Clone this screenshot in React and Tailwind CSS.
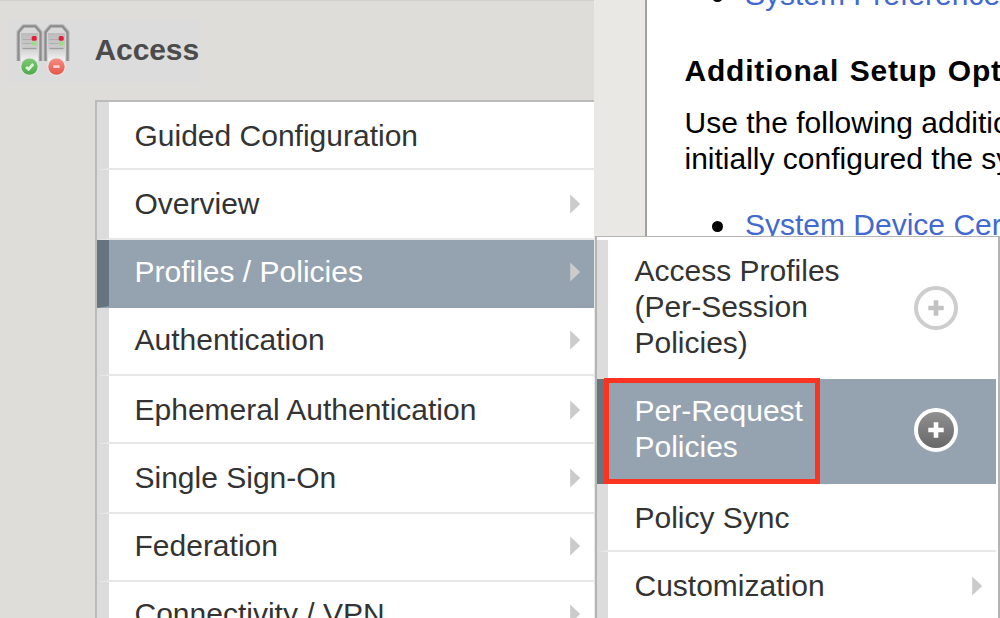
import React from "react";

const menu = [
  { label: "Guided Configuration", row: "h-[68px] pt-4" },
  { label: "Overview", row: "h-[70px] pt-4", arrow: true },
  { label: "Profiles / Policies", row: "h-[68px] pt-[14px]", arrow: true, active: true },
  { label: "Authentication", row: "h-[68px] pt-[14px]", arrow: true },
  { label: "Ephemeral Authentication", row: "h-[68px] pt-4", arrow: true },
  { label: "Single Sign-On", row: "h-[70px] pt-4", arrow: true },
  { label: "Federation", row: "h-[68px] pt-[14px]", arrow: true },
  { label: "Connectivity / VPN", row: "h-[68px] pt-[14px]", arrow: true },
];

function Arrow() {
  return (
    <svg width="11" height="20" viewBox="0 0 11 20" className="block shrink-0">
      <path d="M0.2 0.5 L10.2 10 L0.2 19.5 Z" fill="#cbcbcb" />
    </svg>
  );
}

function MenuRow({ item }) {
  return (
    <li
      className={`flex items-start border-b-2 border-l-[12px] pl-[25.5px] pr-[13px] ${item.row} ${
        item.active
          ? "border-b-[#93a1af] border-l-[#667480] bg-[#95a2b0] text-white"
          : "border-b-[#e8e8e8] border-l-[#dcdcdc] bg-white text-[#333]"
      }`}
    >
      <span className="grow">{item.label}</span>
      {item.arrow && (
        <span className="pt-2">
          <Arrow />
        </span>
      )}
    </li>
  );
}

function Server({ x }) {
  return (
    <g transform={`translate(${x} 0)`}>
      <path d="M1.8 37 V8 L7 2 H19 L24.2 8 V37" fill="#d8d8d8" stroke="#b4b4b4" strokeWidth="3.6" strokeLinejoin="round" />
      <path d="M2 37 V8.4 L7.2 2.2 H18.8 L24 8.4 V37" fill="none" stroke="#8c8c8c" strokeWidth="2" strokeLinejoin="round" />
      <rect x="4.5" y="9" width="17" height="28" fill="url(#serverFace)" />
      <path d="M6 15.5 H15 M6 19.5 H15" stroke="#adadad" strokeWidth="1" />
      <path d="M6 24.5 H20" stroke="#9f9f9f" strokeWidth="1.4" />
      <rect x="15.2" y="12" width="5" height="4.8" rx="1.6" fill="#e31f35" />
      <rect x="15.4" y="17.4" width="4.6" height="4" rx="1.5" fill="#98e07b" />
    </g>
  );
}

function AccessIcon() {
  return (
    <svg width="56" height="54" viewBox="0 0 56 54" className="block shrink-0">
      <defs>
        <linearGradient id="serverFace" x1="0" y1="0" x2="0" y2="1">
          <stop offset="0" stopColor="#bcbcbc" />
          <stop offset="0.5" stopColor="#cbcbcb" />
          <stop offset="1" stopColor="#f4f4f4" />
        </linearGradient>
        <linearGradient id="okFill" x1="0" y1="0" x2="0" y2="1">
          <stop offset="0" stopColor="#7dca73" />
          <stop offset="1" stopColor="#4fa94c" />
        </linearGradient>
        <linearGradient id="noFill" x1="0" y1="0" x2="0" y2="1">
          <stop offset="0" stopColor="#f58c80" />
          <stop offset="1" stopColor="#e4564b" />
        </linearGradient>
      </defs>
      <Server x={0.5} />
      <Server x={27.5} />
      <circle cx="13.5" cy="42.6" r="9.4" fill="#e6e6e6" />
      <circle cx="13.5" cy="42.6" r="8.2" fill="url(#okFill)" />
      <path d="M10 43 L12.6 45.2 L17.2 40" fill="none" stroke="#dff3db" strokeWidth="2.8" />
      <circle cx="40.5" cy="42.6" r="9.4" fill="#e6e6e6" />
      <circle cx="40.5" cy="42.6" r="8.2" fill="url(#noFill)" />
      <path d="M37.4 42.6 H43.6" stroke="#fbd9d4" strokeWidth="2.6" />
    </svg>
  );
}

function PlusButton({ active }) {
  return (
    <svg width="46" height="46" viewBox="0 0 46 46" className="block shrink-0">
      <defs>
        <linearGradient id="plusFill" x1="0" y1="0" x2="0" y2="1">
          <stop offset="0" stopColor="#929292" />
          <stop offset="1" stopColor="#656565" />
        </linearGradient>
      </defs>
      <circle
        cx="23"
        cy="23"
        r="20"
        fill={active ? "url(#plusFill)" : "#ffffff"}
        stroke={active ? "#ffffff" : "#cdcdcd"}
        strokeWidth="4"
      />
      <path d="M23 15.3 V30.7 M15.3 23 H30.7" stroke={active ? "#ffffff" : "#c2c2c2"} strokeWidth="4.6" />
    </svg>
  );
}

function Bullet({ children }) {
  return (
    <li className="flex h-9 items-start">
      <span className="ml-[27px] mr-[22px] mt-[14px] size-[11px] shrink-0 rounded-full bg-black" />
      <span className="text-[#4269d0]">{children}</span>
    </li>
  );
}

export default function App() {
  return (
    <div className="relative flex h-[618px] w-[1000px] overflow-hidden whitespace-nowrap bg-white font-['Liberation_Sans',Arial,sans-serif] text-[30px] leading-9">
      <nav className="flex h-full w-[594px] shrink-0 flex-col overflow-hidden border-t border-[#d0d0ce] bg-[#deddd9]">
        <header className="ml-2 mt-[19px] flex h-[62px] w-[192px] shrink-0 items-start bg-[#dcdcdc]">
          <span className="ml-2 mt-1">
            <AccessIcon />
          </span>
          <h1 className="ml-[22.5px] mt-3 font-bold tracking-[-0.1px] text-[#4b4b4b]">Access</h1>
        </header>
        <ul className="ml-[95px] mt-[18px] w-[499px] shrink-0 border-l-2 border-t-2 border-[#bbb] bg-white">
          {menu.map((item) => (
            <MenuRow key={item.label} item={item} />
          ))}
        </ul>
      </nav>

      <div className="h-full w-[51px] shrink-0 bg-[#e9e8e4]" />

      <main className="h-full w-[355px] shrink-0 overflow-hidden border-l-2 border-[#a0a0a0] bg-white text-black">
        <ul className="-mt-[23px] ml-[38px]">
          <Bullet>System Preferences</Bullet>
        </ul>
        <h2 className="ml-[37.5px] mt-10 font-bold tracking-[0.8px] [word-spacing:1.5px]">Additional Setup Options</h2>
        <p className="ml-[37.5px] mt-4">
          Use the following additional
          <br />
          initially configured the system
        </p>
        <ul className="ml-[38px] mt-[30px]">
          <Bullet>System Device Certificate</Bullet>
        </ul>
      </main>

      <aside className="absolute left-[595px] top-[236px] h-[382px] w-[405px] border-l-2 border-r-2 border-t border-[#b4b4b4] bg-white pr-[2px] pt-[3px] text-[#333]">
        <div className="flex h-[139px] items-start border-l-[11px] border-[#dcdcdc] pl-[26.5px] pr-[37px]">
          <p className="grow pt-[13px]">
            Access Profiles
            <br />
            (Per-Session
            <br />
            Policies)
          </p>
          <span className="mt-[45px]">
            <PlusButton />
          </span>
        </div>
        <div className="flex h-[105px] items-start border-l-[11px] border-[#667480] bg-[#95a2b0] pl-[26.5px] pr-[37px] text-white">
          <p className="grow pt-[14px]">
            Per-Request
            <br />
            Policies
          </p>
          <span className="mt-[28px]">
            <PlusButton active />
          </span>
        </div>
        <div className="h-[68px] border-b-2 border-l-[11px] border-b-[#e8e8e8] border-l-[#dcdcdc] pl-[26.5px] pt-4">
          Policy Sync
        </div>
        <div className="flex h-[66px] items-start border-l-[11px] border-[#dcdcdc] pl-[26.5px] pr-[13px] pt-4">
          <span className="grow">Customization</span>
          <span className="pt-2">
            <Arrow />
          </span>
        </div>
      </aside>

      <div className="absolute left-[604px] top-[378px] h-[106px] w-[216px] border-[5px] border-[#fb3422]" />
    </div>
  );
}
